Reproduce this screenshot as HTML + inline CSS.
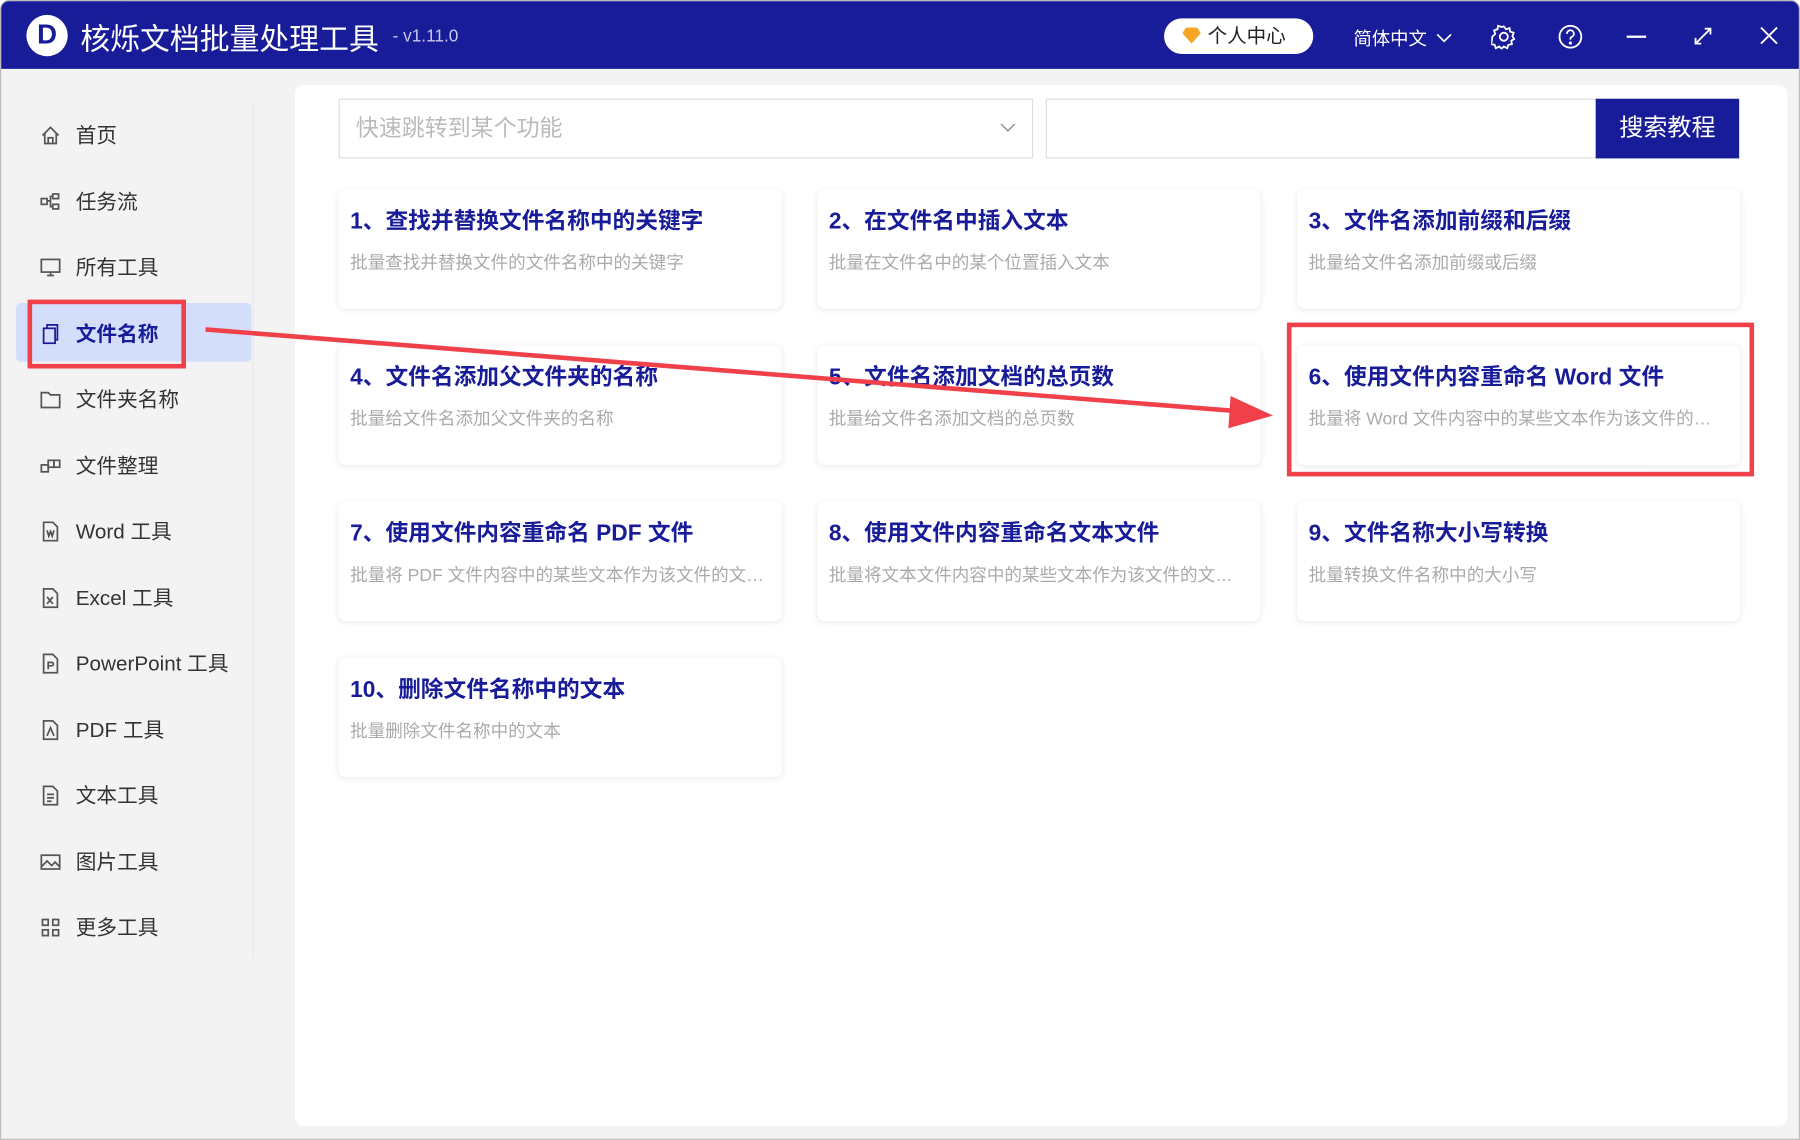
<!DOCTYPE html>
<html><head><meta charset="utf-8"><style>
*{margin:0;padding:0;box-sizing:border-box}
html,body{width:1800px;height:1140px;overflow:hidden;background:#fff}
#w{width:1568px;height:993px;transform:scale(1.14796);transform-origin:0 0;position:relative;background:#f3f3f3;font-family:"Liberation Sans","Noto Sans CJK SC",sans-serif;border:1px solid #bbb;border-radius:8px 8px 0 0;overflow:hidden}
.hd{position:absolute;left:0;top:0;width:1568px;height:59px;background:#181c98;color:#fff}
.logo{position:absolute;left:22px;top:12px;width:36px;height:36px;border-radius:50%;background:#fff;color:#181c98;font:bold 24px "Liberation Sans";text-align:center;line-height:36px}
.ttl{position:absolute;left:69px;top:13px;font-size:26px}
.ver{position:absolute;left:341px;top:22px;font-size:15px;color:#c8c9e8}
.pc{position:absolute;left:1013px;top:15px;width:130px;height:31px;background:#fff;border-radius:16px;color:#222;font-size:17px;line-height:31px;padding-left:38px}
.pc i{position:absolute;left:16px;top:8px;width:16px;height:14px;background:#f5a623;clip-path:polygon(20% 0,80% 0,100% 35%,50% 100%,0 35%)}
.lang{position:absolute;left:1178px;top:19px;font-size:16px}
.sb{position:absolute;left:0;top:59px;width:220px;height:934px}
.it{position:absolute;left:34px;font-size:18px;color:#333;height:24px;line-height:24px}
.it svg{position:absolute;left:0;top:3px}
.it span{position:absolute;left:31px;white-space:nowrap}
.main{position:absolute;left:256px;top:73px;width:1300px;height:907px;background:#fff;border-radius:8px}
.dd{position:absolute;left:294px;top:85px;width:605px;height:52px;border:1px solid #ddd;font-size:20px;color:#bbb;line-height:50px;padding-left:14px}
.si{position:absolute;left:910px;top:85px;width:481px;height:52px;border:1px solid #ddd;border-right:none}
.sbn{position:absolute;left:1389px;top:85px;width:125px;height:52px;background:#181c98;color:#fff;font-size:21px;text-align:center;line-height:52px}
.cd{position:absolute;width:386px;height:104px;background:#fff;border-radius:6px;box-shadow:0 1px 6px rgba(0,0,0,.09);padding:11px 10px}
.cd b{display:block;font-size:19.8px;color:#181c98;white-space:nowrap}
.cd p{margin-top:12px;font-size:15.3px;color:#aaa;white-space:nowrap;overflow:hidden;text-overflow:ellipsis}
</style></head><body><div id="w">
<div class="hd"><div class="logo">D</div><div class="ttl">核烁文档批量处理工具</div><div class="ver">- v1.11.0</div>
<div class="pc"><i></i>个人中心</div><div class="lang">简体中文<svg style="margin-left:8px;vertical-align:1px" width="14" height="9" fill="none" stroke="#fff" stroke-width="1.5"><path d="M1 1l6 6 6-6"/></svg></div>
<svg style="position:absolute;left:1298px;top:20px" width="22" height="22" viewBox="0 0 22 22" fill="none" stroke="#fff" stroke-width="1.6"><circle cx="11" cy="11" r="3.5"/><path d="M11 2l2 2.5 3-1 .5 3 3 1-1 3 1.5 2.5-2.5 1.5 .5 3-3 .5-1 3-3-1.5-2 2-2-2-3 1.5-1-3-3-.5.5-3L1 11l2.5-2.5-1-3 3-1 .5-3 3 1z"/></svg>
<svg style="position:absolute;left:1356px;top:20px" width="22" height="22" viewBox="0 0 22 22" fill="none" stroke="#fff" stroke-width="1.6"><circle cx="11" cy="11" r="9.5"/><path d="M8 8.5a3 3 0 1 1 4 2.7c-1 .4-1 1-1 2.3"/><circle cx="11" cy="16.5" r=".6" fill="#fff"/></svg>
<div style="position:absolute;left:1416px;top:30px;width:17px;height:2px;background:#fff"></div>
<svg style="position:absolute;left:1474px;top:22px" width="17" height="17" viewBox="0 0 17 17" stroke="#fff" stroke-width="1.6" fill="none"><path d="M2 15L15 2M10 2h5v5M2 10v5h5"/></svg>
<svg style="position:absolute;left:1531px;top:21px" width="18" height="18" viewBox="0 0 18 18" stroke="#fff" stroke-width="1.6"><path d="M2 2l14 14M16 2L2 16"/></svg>
</div>
<div class="sb">
<div style="position:absolute;left:219px;top:30px;width:1px;height:745px;background:#e6e6e6"></div>
<div style="position:absolute;left:13px;top:204px;width:205px;height:51px;background:#d4defb;border-radius:4px"></div>
<div style="position:absolute;left:23px;top:201px;width:138px;height:60px;border:4px solid #f0404a"></div>
</div>
<div class="it" style="top:105px"><svg width="18" height="18" fill="none" stroke="#555" stroke-width="1.5"><path d="M2 9L9 2l7 7M4 7v9h10V7M7 16v-5h4v5"/></svg><span>首页</span></div>
<div class="it" style="top:163px"><svg width="18" height="18" fill="none" stroke="#555" stroke-width="1.5"><rect x="1" y="6" width="5" height="5"/><rect x="11" y="2" width="5" height="4"/><rect x="11" y="11" width="5" height="4"/><path d="M6 8h3v-4h2M9 8v5h2"/></svg><span>任务流</span></div>
<div class="it" style="top:220px"><svg width="18" height="18" fill="none" stroke="#555" stroke-width="1.5"><rect x="1" y="2" width="16" height="11"/><path d="M6 16h6M9 13v3"/></svg><span>所有工具</span></div>
<div class="it" style="top:278px;color:#181c98;font-weight:bold"><svg width="18" height="18" fill="none" stroke="#181c98" stroke-width="1.5"><rect x="3" y="4" width="10" height="13"/><path d="M6 4V1h9v13h-2"/></svg><span>文件名称</span></div>
<div class="it" style="top:335px"><svg width="18" height="18" fill="none" stroke="#555" stroke-width="1.5"><path d="M1 3h6l2 2h8v11H1z"/></svg><span>文件夹名称</span></div>
<div class="it" style="top:393px"><svg width="18" height="18" fill="none" stroke="#555" stroke-width="1.5"><rect x="1" y="8" width="6" height="6"/><rect x="7" y="4" width="5" height="6"/><rect x="12" y="4" width="5" height="6"/></svg><span>文件整理</span></div>
<div class="it" style="top:450px"><svg width="18" height="18" fill="none" stroke="#555" stroke-width="1.5"><path d="M3 1h8l4 4v12H3z"/><path d="M6 8l1.5 5 1.5-4 1.5 4L12 8"/></svg><span>Word 工具</span></div>
<div class="it" style="top:508px"><svg width="18" height="18" fill="none" stroke="#555" stroke-width="1.5"><path d="M3 1h8l4 4v12H3z"/><path d="M6 8l5 6M11 8l-5 6"/></svg><span>Excel 工具</span></div>
<div class="it" style="top:565px"><svg width="18" height="18" fill="none" stroke="#555" stroke-width="1.5"><path d="M3 1h8l4 4v12H3z"/><path d="M7 14V8h3a1.5 1.5 0 0 1 0 3H7"/></svg><span>PowerPoint 工具</span></div>
<div class="it" style="top:623px"><svg width="18" height="18" fill="none" stroke="#555" stroke-width="1.5"><path d="M3 1h8l4 4v12H3z"/><path d="M6 14l3-7 3 7"/></svg><span>PDF 工具</span></div>
<div class="it" style="top:680px"><svg width="18" height="18" fill="none" stroke="#555" stroke-width="1.5"><path d="M3 1h8l4 4v12H3z"/><path d="M6 8h6M6 11h6M6 14h4"/></svg><span>文本工具</span></div>
<div class="it" style="top:738px"><svg width="18" height="18" fill="none" stroke="#555" stroke-width="1.5"><rect x="1" y="3" width="16" height="12"/><path d="M1 13l5-5 4 4 3-3 4 4"/></svg><span>图片工具</span></div>
<div class="it" style="top:795px"><svg width="18" height="18" fill="none" stroke="#555" stroke-width="1.5"><rect x="2" y="2" width="5" height="5"/><rect x="11" y="2" width="5" height="5"/><rect x="2" y="11" width="5" height="5"/><rect x="11" y="11" width="5" height="5"/></svg><span>更多工具</span></div>
<div class="main"></div>
<div class="dd">快速跳转到某个功能<svg style="position:absolute;right:14px;top:19px" width="14" height="10" fill="none" stroke="#999" stroke-width="1.4"><path d="M1 2l6 6 6-6"/></svg></div>
<div class="si"></div><div class="sbn">搜索教程</div>
<div class="cd" style="left:294px;top:164px"><b>1、查找并替换文件名称中的关键字</b><p>批量查找并替换文件的文件名称中的关键字</p></div>
<div class="cd" style="left:711px;top:164px"><b>2、在文件名中插入文本</b><p>批量在文件名中的某个位置插入文本</p></div>
<div class="cd" style="left:1129px;top:164px"><b>3、文件名添加前缀和后缀</b><p>批量给文件名添加前缀或后缀</p></div>
<div class="cd" style="left:294px;top:300px"><b>4、文件名添加父文件夹的名称</b><p>批量给文件名添加父文件夹的名称</p></div>
<div class="cd" style="left:711px;top:300px"><b>5、文件名添加文档的总页数</b><p>批量给文件名添加文档的总页数</p></div>
<div class="cd" style="left:1129px;top:300px"><b>6、使用文件内容重命名 Word 文件</b><p>批量将 Word 文件内容中的某些文本作为该文件的文件名</p></div>
<div class="cd" style="left:294px;top:436px"><b>7、使用文件内容重命名 PDF 文件</b><p>批量将 PDF 文件内容中的某些文本作为该文件的文件名</p></div>
<div class="cd" style="left:711px;top:436px"><b>8、使用文件内容重命名文本文件</b><p>批量将文本文件内容中的某些文本作为该文件的文件名</p></div>
<div class="cd" style="left:1129px;top:436px"><b>9、文件名称大小写转换</b><p>批量转换文件名称中的大小写</p></div>
<div class="cd" style="left:294px;top:572px"><b>10、删除文件名称中的文本</b><p>批量删除文件名称中的文本</p></div>
<div style="position:absolute;left:1120px;top:280px;width:407px;height:134px;border:4px solid #f0404a"></div>
<svg style="position:absolute;left:0;top:0" width="1568" height="993"><line x1="178" y1="286" x2="1075" y2="357" stroke="#f0404a" stroke-width="4"/><polygon points="1108,361 1071,344 1069,372" fill="#f0404a"/></svg>
</div></body></html>
